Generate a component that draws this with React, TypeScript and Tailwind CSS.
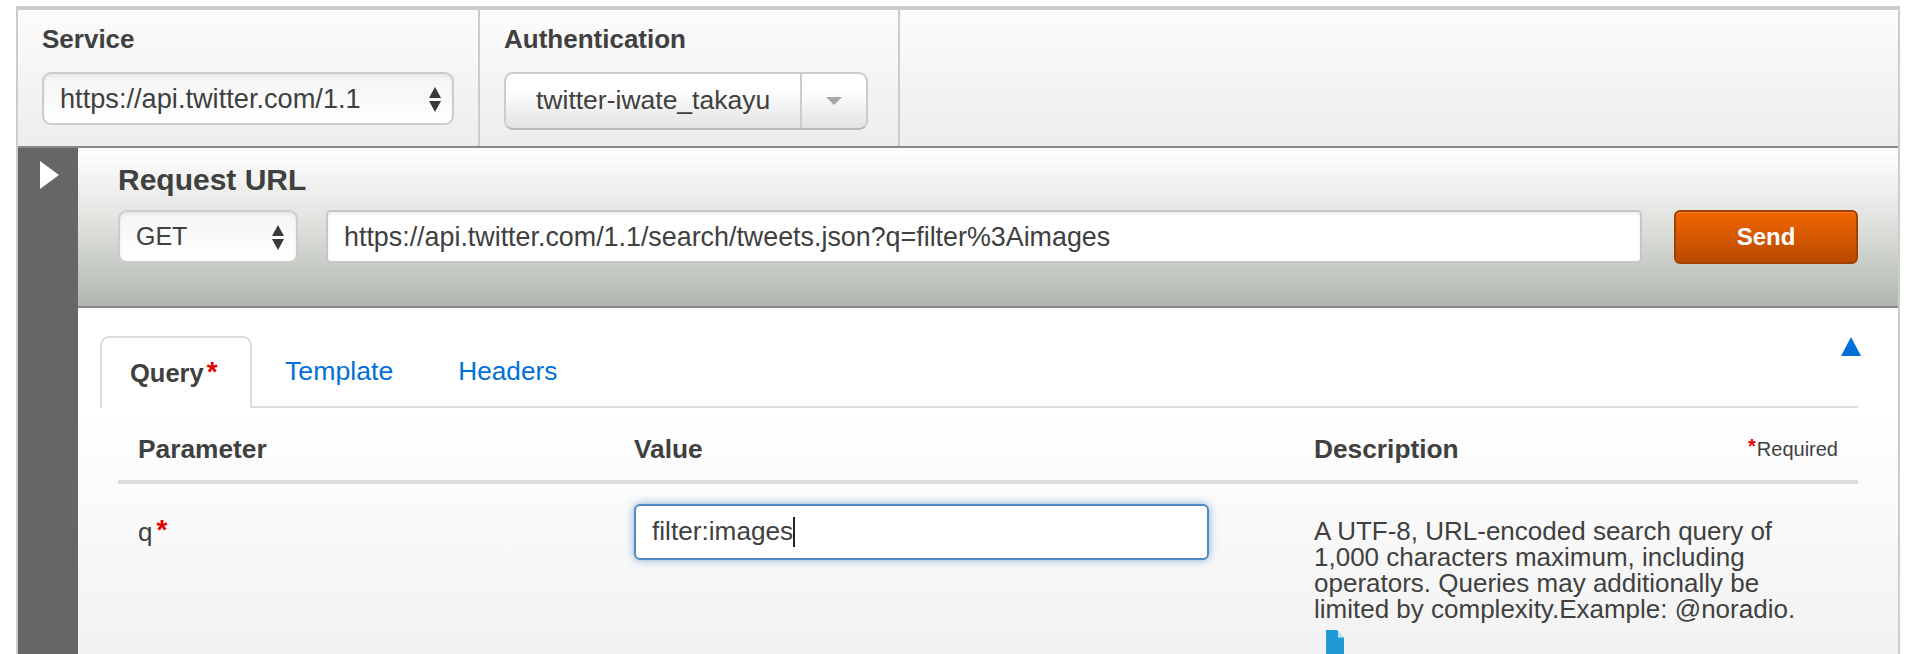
import React from 'react';

function UpDown() {
  return (
    <svg width="14" height="26" viewBox="0 0 14 26" className="shrink-0">
      <path d="M7 1 L13 12 L1 12 Z M1 15 L13 15 L7 26 Z" fill="#3a3a3a" />
    </svg>
  );
}

function Star({ className }: { className: string }) {
  return <span className={`font-bold text-[#e60000] leading-none ${className}`}>*</span>;
}

function Select({ label, width, pad, text }: { label: string; width: string; pad: string; text: string }) {
  return (
    <div className={`flex h-[53px] items-center justify-between rounded-[9px] border-2 border-[#cccccc] bg-linear-to-b from-[#f4f4f4] to-white shadow-[inset_0_2px_3px_rgba(0,0,0,0.06)] ${width} ${pad}`}>
      <span className={`pt-[1px] ${text}`}>{label}</span>
      <UpDown />
    </div>
  );
}

export default function App() {
  return (
    <div className="h-[654px] w-[1910px] overflow-hidden bg-white pl-[16px] pr-[10px] pt-[6px] font-['Liberation_Sans',Arial,sans-serif] text-[#404040]">
      <div className="h-[648px] border-x-2 border-t-4 border-[#cccccc]">
        {/* service bar */}
        <div className="flex h-[138px] border-b-2 border-[#888888] bg-linear-to-b from-[#fcfcfc] to-[#ededed]">
          <div className="w-[462px] border-r-2 border-[#cccccc] pl-[24px]">
            <div className="pt-[14px] text-[26px] font-bold leading-[30px]">Service</div>
            <div className="mt-[18px]">
              <Select label="https://api.twitter.com/1.1" width="w-[412px]" pad="pl-[16px] pr-[10px]" text="text-[27.2px]" />
            </div>
          </div>
          <div className="w-[420px] border-r-2 border-[#cccccc] pl-[24px]">
            <div className="pt-[14px] text-[26px] font-bold leading-[30px]">Authentication</div>
            <div className="mt-[18px] flex h-[58px] w-[364px] rounded-[9px] border-2 border-[#cccccc] border-b-[#bbbbbb] bg-linear-to-b from-white from-[30%] to-[#e2e2e2]">
              <div className="flex w-[296px] items-center border-r-2 border-[#cccccc] pl-[30px] text-[26.5px]">twitter-iwate_takayu</div>
              <div className="flex flex-1 items-center justify-center">
                <svg width="16" height="8" viewBox="0 0 16 8"><path d="M0 0 H16 L8 8 Z" fill="#a6a6a6" /></svg>
              </div>
            </div>
          </div>
        </div>

        <div className="flex h-[506px]">
          {/* side toggle */}
          <div className="w-[60px] shrink-0 bg-[#666666] pl-[22px] pt-[13px]">
            <svg width="19" height="28" viewBox="0 0 19 28"><path d="M0 0 L19 14 L0 28 Z" fill="#ffffff" /></svg>
          </div>

          <div className="flex min-w-0 flex-1 flex-col">
            {/* request url */}
            <div className="h-[160px] shrink-0 border-b-2 border-[#888888] bg-linear-to-b from-white via-[#e6e7e4] via-[40%] to-[#b0b7ae] pl-[40px] pr-[40px]">
              <div className="pt-[15px] text-[30px] font-bold leading-[34px]">Request URL</div>
              <div className="mt-[13px] flex items-start">
                <Select label="GET" width="w-[180px]" pad="pl-[16px] pr-[11px]" text="text-[25px]" />
                <div className="ml-[28px] flex h-[53px] w-[1316px] items-center rounded-[5px] border-2 border-[#c6c6c6] bg-white pl-[16px] pt-[1px] text-[26.85px] shadow-[inset_0_2px_3px_rgba(0,0,0,0.08)]">
                  https://api.twitter.com/1.1/search/tweets.json?q=filter%3Aimages
                </div>
                <button className="ml-[32px] flex h-[54px] w-[184px] items-center justify-center rounded-[6px] border-2 border-[#a34100] bg-linear-to-b from-[#f26500] to-[#b84a00] text-[24px] font-bold text-white shadow-[inset_0_1px_0_rgba(255,255,255,0.2)]">
                  Send
                </button>
              </div>
            </div>

            {/* tabs and table */}
            <div className="flex-1 bg-linear-to-b from-white from-[30%] to-[#f2f2f2] pl-[22px] pr-[40px] pt-[28px]">
              <div className="flex h-[72px] items-start justify-between border-b-2 border-[#dddddd]">
                <div className="flex items-start">
                  <div className="flex h-[72px] w-[152px] items-start rounded-t-[9px] border-x-2 border-t-2 border-[#dddddd] bg-white pl-[28px] pt-[20px]">
                    <span className="text-[25.5px] font-bold leading-[30px]">Query</span>
                    <Star className="ml-[3px] text-[28px]" />
                  </div>
                  <div className="ml-[33px] mt-[20px] text-[26.7px] leading-[30px] text-[#0070d8]">Template</div>
                  <div className="ml-[65px] mt-[20px] text-[26.2px] leading-[30px] text-[#0070d8]">Headers</div>
                </div>
                <svg width="20" height="19" viewBox="0 0 20 19" className="-mr-[3px] mt-[1px]"><path d="M10 0 L20 19 H0 Z" fill="#0070d8" /></svg>
              </div>

              <div className="ml-[18px]">
                <div className="grid h-[76px] grid-cols-[496px_680px_1fr] items-start border-b-4 border-[#dddddd] px-[20px] pt-[26px] text-[26.3px] font-bold leading-[30px]">
                  <div>Parameter</div>
                  <div>Value</div>
                  <div className="flex items-start justify-between">
                    <span>Description</span>
                    <span className="flex items-start text-[20px] font-normal">
                      <Star className="mr-[1px] mt-[2px] text-[20px]" />
                      <span>Required</span>
                    </span>
                  </div>
                </div>
                <div className="grid grid-cols-[496px_680px_1fr] px-[20px]">
                  <div className="flex items-start pt-[33px] text-[26px] leading-[30px]">
                    <span>q</span>
                    <Star className="-mt-[1px] ml-[4px] text-[28px]" />
                  </div>
                  <div className="pt-[20px]">
                    <div className="flex h-[56px] w-[575px] items-center rounded-[6px] border-2 border-[#5289c0] bg-white pl-[16px] text-[26.2px] shadow-[0_0_9px_rgba(70,130,200,0.65)]">
                      <span>filter:images</span>
                      <span className="h-[30px] w-[2px] bg-[#222222]" />
                    </div>
                  </div>
                  <div className="pt-[34px] text-[26px] leading-[26px]">
                    <div className="w-[500px]">
                      A UTF-8, URL-encoded search query of 1,000 characters maximum, including operators. Queries may additionally be limited by complexity.Example: @noradio.
                    </div>
                    <svg width="18" height="24" viewBox="0 0 18 24" className="ml-[12px] mt-[8px]">
                      <path d="M0 0 H11 L18 8 V24 H0 Z" fill="#1f9ad6" />
                      <path d="M12 1 L17.5 7.5 H12 Z" fill="#bfe3f5" />
                    </svg>
                  </div>
                </div>
              </div>
            </div>
          </div>
        </div>
      </div>
    </div>
  );
}
